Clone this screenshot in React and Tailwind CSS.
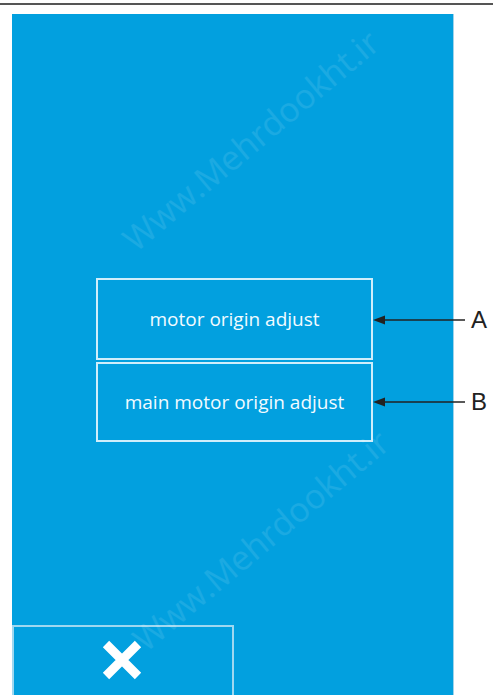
const Arrow = ({ label, top }) => (
  <div className="absolute left-[373px] flex items-center" style={{ top }}>
    <svg width="92" height="12" viewBox="0 0 92 12">
      <line x1="6" y1="6" x2="92" y2="6" stroke="#222" strokeWidth="1.5" />
      <polygon points="0,6 12,1.5 12,10.5" fill="#222" />
    </svg>
    <span className="ml-[6px] text-[24px] leading-none text-[#222] font-['Liberation_Sans',sans-serif]">
      {label}
    </span>
  </div>
);

const MenuButton = ({ children, className = "" }) => (
  <button
    className={`w-[277px] flex items-center justify-center border-2 border-[#cfeefb] text-[#f2fbff] text-[19px] font-['Open_Sans',sans-serif] ${className}`}
  >
    {children}
  </button>
);

// faint diagonal watermark
const Watermark = ({ className }) => (
  <div
    className={`absolute text-[34px] font-['Open_Sans',sans-serif] text-white/10 -rotate-[40deg] whitespace-nowrap pointer-events-none ${className}`}
  >
    Www.Mehrdookht.ir
  </div>
);

export default function App() {
  return (
    <div className="relative w-[493px] h-[695px] bg-white overflow-hidden">
      <div className="mt-[3px] h-[2px] bg-[#555]" />

      <div className="ml-[12px] mt-[9px] w-[442px] h-[681px] bg-[#02a0df] border-r border-[#9fd3ea] flex flex-col">
        <div className="mt-[264px] ml-[84px] flex flex-col gap-[2px]">
          <MenuButton className="h-[82px]">motor origin adjust</MenuButton>
          <MenuButton className="h-[80px]">main motor origin adjust</MenuButton>
        </div>

        <div className="mt-auto w-[222px] h-[70px] border-2 border-b-0 border-[#9fd8f0] flex items-center justify-center">
          <svg width="44" height="40" viewBox="0 0 44 40" className="-mt-[2px] -ml-[2px]">
            <path d="M6 4 L38 36 M38 4 L6 36" stroke="white" strokeWidth="9" strokeLinecap="butt" />
          </svg>
        </div>
      </div>

      <Watermark className="left-[90px] top-[115px]" />
      <Watermark className="left-[100px] top-[515px]" />

      <Arrow label="A" top="308px" />
      <Arrow label="B" top="390px" />
    </div>
  );
}
